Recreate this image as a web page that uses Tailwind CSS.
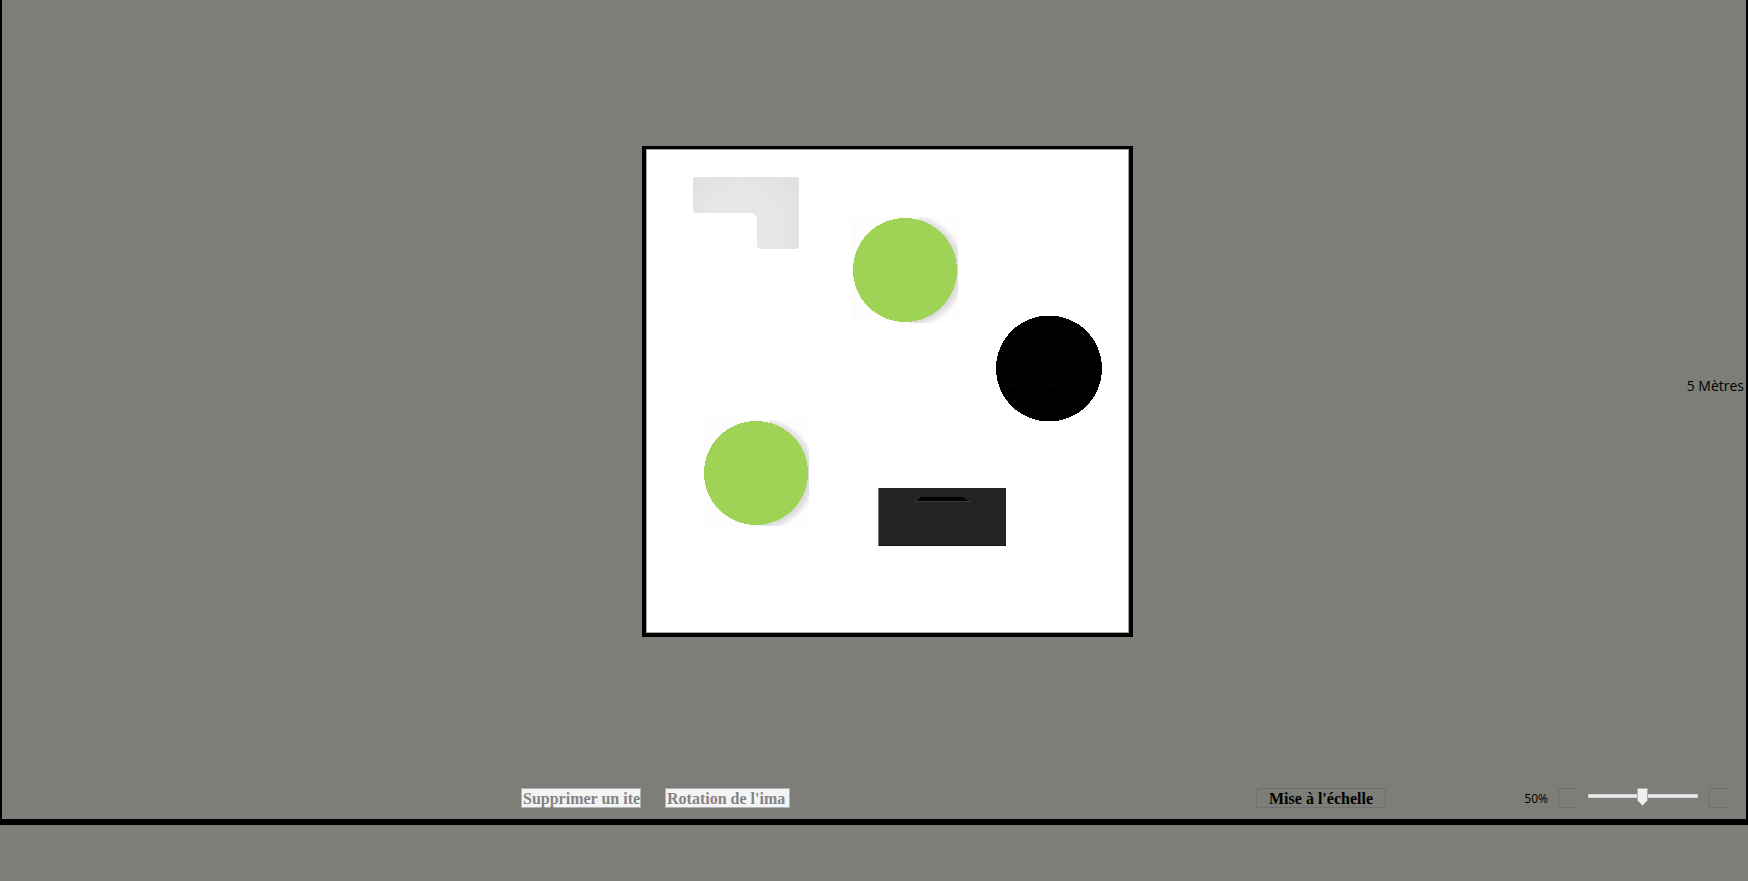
<!DOCTYPE html>
<html lang="fr">
<head>
<meta charset="utf-8">
<title>Plan de la pièce</title>
<script src="https://cdn.jsdelivr.net/npm/@tailwindcss/browser@4"></script>
</head>
<body class="min-h-screen bg-[#7d7e78] font-['Open_Sans',sans-serif] text-black">
<main class="border-x-2 border-b-6 border-black pt-[146px] pb-[11px]">
  <section class="grid grid-cols-[1fr_auto_1fr] items-center pl-[27px]">
    <div></div>
    <div class="border-4 border-t-3 border-black bg-white">
      <!-- Room canvas: each piece of furniture sits where it was dropped -->
      <svg class="block h-[484px] w-[483px]" viewBox="646 149 483 484" role="img" aria-label="Plan">
        <defs>
          <radialGradient id="sofa" gradientUnits="userSpaceOnUse" cx="742" cy="230" r="80">
            <stop offset="0" stop-color="#e9e9e9"/><stop offset="0.5" stop-color="#e6e6e6"/><stop offset="1" stop-color="#dfdfdf"/>
          </radialGradient>
          <radialGradient id="shade" gradientUnits="userSpaceOnUse" cx="56" cy="54" r="58">
            <stop offset="0.86" stop-color="#dadada"/><stop offset="0.92" stop-color="#e6e6e6"/><stop offset="1" stop-color="#fdfdfd"/>
          </radialGradient>
          <g id="pouf">
            <path d="M0 0h106v106H0z" fill="#fdfdfd"/>
            <path d="M66 0h40v106H58z" fill="url(#shade)"/>
            <circle cx="53" cy="53" r="52" fill="#9fd356" shape-rendering="crispEdges"/>
          </g>
        </defs>
        <path d="M646.500 149V633M646 149.500H1129M1128.500 149V633M646 632.500H1129" stroke="#a3a3a3" fill="none"/>
        <path d="M696 177H796q3 0 3 3V246q0 3-3 3H761q-4 0-4-4V221q0-8-8-8H696q-3 0-3-3V180q0-3 3-3z" fill="url(#sofa)"/>
        <use href="#pouf" x="852" y="217"/>
        <use href="#pouf" x="703" y="420"/>
        <circle cx="1049" cy="368.500" r="53" shape-rendering="crispEdges"/>
        <path d="M1006 342v52M1035 320v96M1064 320v96M1093 345v46M1008 356h86M1008 385h86M1022 327h54" stroke="#080808" stroke-dasharray="3 2"/>
        <path d="M878 488h128v58H878z" fill="#232323"/>
        <path d="M878.500 488v58" stroke="#777"/>
        <path d="M879 545.500h127" stroke="#151015"/>
        <path d="M917 501l4-4h42l5 4z"/>
        <path d="M914 501.500h57" stroke="#3a3a3a"/>
      </svg>
    </div>
    <p class="pr-[2px] pb-[12px] text-right text-[14px] leading-5">5 Mètres</p>
  </section>
  <section class="mt-[151px] flex h-5 items-stretch justify-between pr-[18px] pl-[519px]">
    <div class="flex gap-6 font-['Liberation_Serif',serif] text-base leading-5 font-bold text-[#838383]">
      <button type="button" disabled class="w-[120px] border border-[#adb2b5] bg-[#f4f4f4] px-px text-left whitespace-nowrap">Supprimer un ite</button>
      <button type="button" disabled class="w-[125px] border border-[#adb2b5] bg-[#f4f4f4] px-px text-left whitespace-nowrap">Rotation de l'ima</button>
    </div>
    <div class="flex">
      <button type="button" class="w-[130px] border border-[#707070] text-center font-['Liberation_Serif',serif] text-base leading-5 font-bold">Mise à l'échelle</button>
      <label for="zoom" class="w-[172px] pr-[10px] text-right text-[12px] leading-[22px]">50%</label>
      <button type="button" aria-label="Zoom arrière" class="w-5 border border-r-0 border-[#707070]"></button>
      <div class="relative mx-[10px] w-[110px]">
        <input id="zoom" type="range" min="0" max="100" value="50" class="absolute inset-0 w-full opacity-0">
        <svg class="pointer-events-none block h-5 w-full" viewBox="0 0 110 20" aria-hidden="true">
          <path d="M.5 6.500h109v3H.5z" fill="#e7eaea" stroke="#d6d6d6"/>
          <path d="M49.500 .5h10v12l-5 5-5-5z" fill="#f0f0f0" stroke="#acacac"/>
        </svg>
      </div>
      <button type="button" aria-label="Zoom avant" class="w-5 border border-r-0 border-[#707070]"></button>
    </div>
  </section>
</main>
</body>
</html>
